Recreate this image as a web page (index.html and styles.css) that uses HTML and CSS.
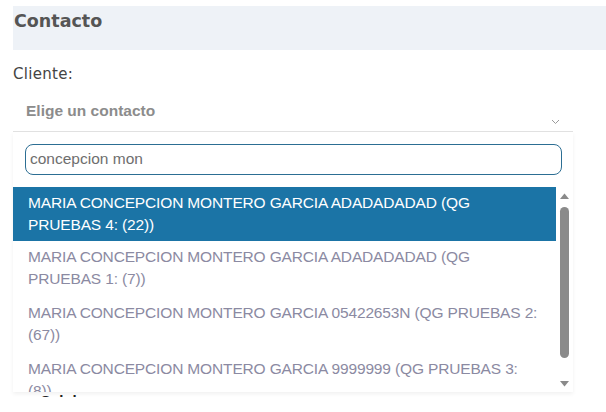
FILE: index.html
```html
<!DOCTYPE html>
<html lang="es">
<head>
<meta charset="utf-8">
<link rel="stylesheet" href="styles.css">
</head>
<body>
<div class="page">
  <div class="section-head">Contacto</div>
  <div class="field">
    <div class="label">Cliente:</div>
    <div class="select">
      <span class="placeholder">Elige un contacto</span>
      <svg class="chev" width="9" height="6" viewBox="0 0 9 6"><path d="M1 1 L4.5 4.5 L8 1" fill="none" stroke="#9a9a9a" stroke-width="1"/></svg>
    </div>
    <div class="dropdown">
      <div class="search-row"><div class="search">concepcion mon</div></div>
      <div class="list">
        <div class="items">
          <div class="item active">MARIA CONCEPCION MONTERO GARCIA ADADADADAD (QG PRUEBAS 4: (22))</div>
          <div class="item">MARIA CONCEPCION MONTERO GARCIA ADADADADAD (QG PRUEBAS 1: (7))</div>
          <div class="item">MARIA CONCEPCION MONTERO GARCIA 05422653N (QG PRUEBAS 2: (67))</div>
          <div class="item">MARIA CONCEPCION MONTERO GARCIA 9999999 (QG PRUEBAS 3: (8))</div>
        </div>
        <div class="scrollbar">
          <svg class="arrow" width="9" height="6" viewBox="0 0 9 6"><path d="M0 6 L4.5 0.5 L9 6 Z" fill="#8a8a8a"/></svg>
          <div class="track"><div class="thumb"></div></div>
          <svg class="arrow" width="9" height="6" viewBox="0 0 9 6"><path d="M0 0 L4.5 5.5 L9 0 Z" fill="#8a8a8a"/></svg>
        </div>
      </div>
    </div>
    <div class="next-label"><span>Celular:</span></div>
  </div>
</div>
</body>
</html>
```
FILE: styles.css
```css
* { box-sizing: border-box; }
html, body { margin: 0; padding: 0; background: #fff; }
.page {
  padding: 6px 0 0 13px;
  font-family: "Liberation Sans", Arial, sans-serif;
}
.section-head {
  height: 44px;
  background: #eef2f7;
  padding: 5px 0 0 1px;
  font-family: "DejaVu Sans", sans-serif;
  font-weight: 700;
  font-size: 17.5px;
  color: #555;
}
.field { width: 560px; }
.label {
  margin-top: 15px;
  font-family: "DejaVu Sans", sans-serif;
  font-size: 15px;
  letter-spacing: 0.3px;
  color: #444;
  height: 22px;
}
.select {
  margin-top: 9px;
  height: 36px;
  border-bottom: 1px solid #e2e2e2;
  display: flex;
  align-items: flex-start;
  justify-content: space-between;
  padding: 6px 13px 0 13px;
}
.placeholder {
  font-weight: 700;
  font-size: 15.5px;
  color: #8c8c8c;
}
.chev { margin-top: 17px; }
.dropdown {
  height: 260px;
  background: #fff;
  box-shadow: 0 2px 4px rgba(0,0,0,0.06);
  display: flex;
  flex-direction: column;
}
.search-row { padding: 12px 11px 12px 12px; }
.search {
  height: 31px;
  border: 1.5px solid #2c6e93;
  border-radius: 8px;
  padding: 5px 0 0 4px;
  font-size: 15.5px;
  color: #6e6e6e;
}
.list {
  flex: 1;
  min-height: 0;
  display: flex;
}
.items { width: 543px; overflow: hidden; }
.item {
  padding: 5px 14px 7px 15px;
  line-height: 22px;
  font-size: 15.5px;
  letter-spacing: -0.15px;
  color: #8b8aa2;
}
.item.active { background: #1b74a6; color: #fff; padding-bottom: 5px; }
.scrollbar {
  width: 17px;
  display: flex;
  flex-direction: column;
  align-items: center;
  padding: 6px 0 5px 0;
}
.track { flex: 1; padding: 8px 0 23px 0; display: flex; }
.thumb { width: 9px; background: #8a8a8a; border-radius: 4.5px; }
.next-label {
  height: 5px;
  overflow: hidden;
  padding-left: 27px;
  font-weight: 700;
  font-size: 15px;
  color: #222;
}
.next-label span { display: block; line-height: 20px; margin-top: -1px; }
```
